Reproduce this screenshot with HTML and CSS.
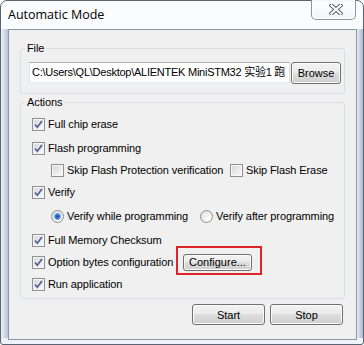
FILE: index.html
```html
<!DOCTYPE html>
<html>
<head>
  <title>Automatic Mode</title>
  <link rel="stylesheet" href="styles.css">
</head>
<body>
  <div class="window">
    <div class="titlebar">
      <span class="title">Automatic Mode</span>
      <span class="close-btn">
        <svg width="14" height="11" viewBox="0 0 14 11">
          <path d="M2.5 1.5 L11.5 9.5 M11.5 1.5 L2.5 9.5" stroke="#5b6068" stroke-width="4.2" stroke-linecap="square"/>
          <path d="M2.5 1.5 L11.5 9.5 M11.5 1.5 L2.5 9.5" stroke="#ffffff" stroke-width="2.2" stroke-linecap="square"/>
        </svg>
      </span>
    </div>

    <div class="client">
      <fieldset class="group">
        <legend>File</legend>
        <div class="file-body">
          <div class="path-field">C:\Users\QL\Desktop\ALIENTEK MiniSTM32 实验1 跑</div>
          <button class="btn browse-btn">Browse</button>
        </div>
      </fieldset>

      <fieldset class="group actions-group">
        <legend>Actions</legend>
        <div class="actions-body">
          <div class="row">
            <span class="check"><svg width="11" height="11" viewBox="0 0 11 11"><path d="M2 5.5 L4.3 8.2 L9 2" fill="none" stroke="#4a5f96" stroke-width="1.7"/></svg></span>
            <span>Full chip erase</span>
          </div>
          <div class="row gap">
            <span class="check"><svg width="11" height="11" viewBox="0 0 11 11"><path d="M2 5.5 L4.3 8.2 L9 2" fill="none" stroke="#4a5f96" stroke-width="1.7"/></svg></span>
            <span>Flash programming</span>
          </div>
          <div class="row indent">
            <span class="opt skip-first">
              <span class="check"></span>
              <span>Skip Flash Protection verification</span>
            </span>
            <span class="opt">
              <span class="check"></span>
              <span>Skip Flash Erase</span>
            </span>
          </div>
          <div class="row">
            <span class="check"><svg width="11" height="11" viewBox="0 0 11 11"><path d="M2 5.5 L4.3 8.2 L9 2" fill="none" stroke="#4a5f96" stroke-width="1.7"/></svg></span>
            <span>Verify</span>
          </div>
          <div class="row indent gap">
            <span class="opt radio-first">
              <span class="radio selected"></span>
              <span>Verify while programming</span>
            </span>
            <span class="opt">
              <span class="radio"></span>
              <span>Verify after programming</span>
            </span>
          </div>
          <div class="row gap">
            <span class="check"><svg width="11" height="11" viewBox="0 0 11 11"><path d="M2 5.5 L4.3 8.2 L9 2" fill="none" stroke="#4a5f96" stroke-width="1.7"/></svg></span>
            <span>Full Memory Checksum</span>
          </div>
          <div class="row">
            <span class="check"><svg width="11" height="11" viewBox="0 0 11 11"><path d="M2 5.5 L4.3 8.2 L9 2" fill="none" stroke="#4a5f96" stroke-width="1.7"/></svg></span>
            <span class="option-label">Option bytes configuration</span>
            <span class="highlight">
              <button class="btn configure-btn">Configure...</button>
            </span>
          </div>
          <div class="row">
            <span class="check"><svg width="11" height="11" viewBox="0 0 11 11"><path d="M2 5.5 L4.3 8.2 L9 2" fill="none" stroke="#4a5f96" stroke-width="1.7"/></svg></span>
            <span>Run application</span>
          </div>
        </div>
      </fieldset>

      <div class="dialog-buttons">
        <button class="btn action-btn">Start</button>
        <button class="btn action-btn">Stop</button>
      </div>
    </div>
  </div>
</body>
</html>
```

FILE: styles.css
```css
body {
  margin: 0;
  font-family: "Liberation Sans", Arial, sans-serif;
  font-size: 11px;
  letter-spacing: -0.1px;
  color: #000;
}

.window {
  box-sizing: border-box;
  width: 364px;
  height: 345px;
  display: flex;
  flex-direction: column;
  padding: 0 6px 4px 7px;
  border: 1px solid #5a6470;
  border-radius: 7px 7px 3px 3px;
  background:
    linear-gradient(to right, #eef3f8, #b4c4d8) left 0 top 28px / 7px calc(100% - 34px) no-repeat,
    linear-gradient(to right, #e6edf5, #a9bace) right 0 top 28px / 6px calc(100% - 34px) no-repeat,
    linear-gradient(#fafcfe, #eef3f9);
}

.titlebar {
  height: 28px;
  display: flex;
  justify-content: space-between;
}

.title {
  font-family: "Open Sans", "Noto Sans", sans-serif;
  font-size: 12.5px;
  letter-spacing: 0;
  line-height: 28px;
  color: #000;
}

.close-btn {
  box-sizing: border-box;
  width: 45px;
  height: 20px;
  margin: -1px 1px 0 0;
  display: flex;
  align-items: center;
  justify-content: center;
  padding-left: 4px;
  border: 1px solid #8d949c;
  border-top: none;
  border-radius: 0 0 5px 5px;
  background: linear-gradient(rgba(255, 255, 255, 0.7), rgba(236, 241, 247, 0.6));
  box-shadow: inset 0 0 0 1px rgba(255, 255, 255, 0.8);
}

.client {
  flex: 1;
  border: 1px solid #8b97a4;
  background: #f0f0f0;
  padding: 12px 11px 0;
}

.group {
  margin: 0;
  padding: 0;
  min-width: 0;
  border: 1px solid #d5dfe5;
  border-radius: 3px;
}

.group legend {
  margin-left: 4px;
  padding: 0 2px;
  line-height: 13px;
}

.file-body {
  display: flex;
  gap: 1px;
  padding: 7px 3px 9px 8px;
}

.path-field {
  box-sizing: border-box;
  width: 261px;
  height: 21px;
  padding-left: 2px;
  border: 1px solid;
  border-color: #abadb3 #dbdfe6 #e3e9ef #e2e3ea;
  background: #fff;
  line-height: 19px;
  letter-spacing: -0.25px;
  white-space: nowrap;
  overflow: hidden;
  font-family: "Liberation Sans", "Noto Sans CJK SC", sans-serif;
}

.btn {
  box-sizing: border-box;
  padding: 0;
  border: 1px solid #707070;
  border-radius: 3px;
  background: linear-gradient(#f2f2f2 0, #ebebeb 50%, #dddddd 50%, #cfcfcf 100%);
  box-shadow: inset 0 0 0 1px #fbfbfb;
  font: inherit;
  color: #000;
}

.browse-btn {
  width: 50px;
  height: 22px;
}

.actions-group {
  margin-top: 2px;
}

.actions-body {
  padding: 4px 0 3px 11px;
}

.row {
  display: flex;
  align-items: center;
  gap: 3px;
  height: 22px;
}

.row.gap {
  margin-top: 2px;
}

.row.indent {
  padding-left: 19px;
  gap: 0;
}

.opt {
  display: flex;
  align-items: center;
  gap: 3px;
}

.skip-first {
  width: 179px;
}

.radio-first {
  width: 149px;
}

.check {
  box-sizing: border-box;
  flex: none;
  width: 13px;
  height: 13px;
  display: flex;
  align-items: center;
  justify-content: center;
  border: 1px solid #8e8f8f;
  background: linear-gradient(135deg, #d6d6d6, #fafafa);
  box-shadow: inset 0 0 0 1px #f6f6f6;
}

.radio {
  box-sizing: border-box;
  flex: none;
  width: 13px;
  height: 13px;
  border: 1px solid #8e8f8f;
  border-radius: 50%;
  background: radial-gradient(circle at 65% 70%, #ffffff, #d9d9d9);
}

.radio.selected {
  background:
    radial-gradient(circle at 50% 50%, #1c4f9f 0, #2e6dc4 1.6px, #7fb0e8 3.2px, #c4dcf5 3.6px, transparent 3.8px),
    radial-gradient(circle at 65% 70%, #ffffff, #d9d9d9);
}

.option-label {
  width: 132px;
}

.highlight {
  position: relative;
  display: flex;
}

.highlight::after {
  content: "";
  position: absolute;
  left: -7px;
  top: -8px;
  right: -10px;
  bottom: -4px;
  border: 2px solid #e0222b;
}

.configure-btn {
  width: 69px;
  height: 17px;
}

.dialog-buttons {
  display: flex;
  justify-content: flex-end;
  gap: 5px;
  margin: 5px 2px 0 0;
}

.action-btn {
  width: 73px;
  height: 21px;
}
```
